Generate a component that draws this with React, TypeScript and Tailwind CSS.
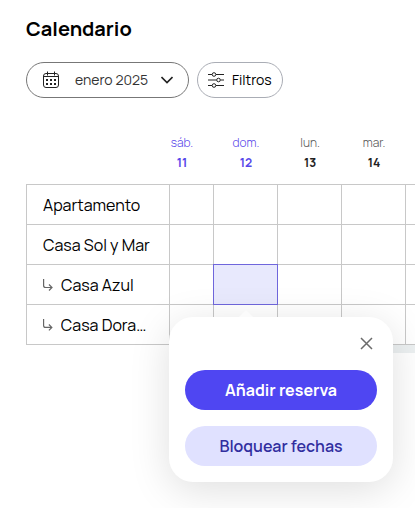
import { useState } from "react";

const days = [
  { name: "sáb.", number: 11, weekend: true },
  { name: "dom.", number: 12, weekend: true },
  { name: "lun.", number: 13, weekend: false },
  { name: "mar.", number: 14, weekend: false },
];

const properties = [
  { name: "Apartamento", child: false },
  { name: "Casa Sol y Mar", child: false },
  { name: "Casa Azul", child: true },
  { name: "Casa Dorada", child: true },
];

const CalendarIcon = () => (
  <svg width="18" height="18" viewBox="0 0 18 18" fill="none" stroke="#222" aria-hidden="true">
    <rect x="1.5" y="2.5" width="15" height="14" rx="2.5" />
    <path d="M1.5 5.5h15M5.500 .5v4M12.500 .5v4" />
    <g fill="#222" stroke="none">
      <rect x="4" y="8" width="2" height="2" />
      <rect x="8" y="8" width="2" height="2" />
      <rect x="12" y="8" width="2" height="2" />
      <rect x="4" y="12" width="2" height="2" />
      <rect x="8" y="12" width="2" height="2" />
      <rect x="12" y="12" width="2" height="2" />
    </g>
  </svg>
);

const FilterIcon = () => (
  <svg width="16" height="16" viewBox="0 0 16 16" fill="none" stroke="#222" aria-hidden="true">
    <path d="M0 2.5h4M8 2.5h8M0 8h8.500M12.500 8H16M0 13.500h4M8 13.500h8" />
    <circle cx="6" cy="2.500" r="1.800" />
    <circle cx="10.500" cy="8" r="1.800" />
    <circle cx="6" cy="13.500" r="1.800" />
  </svg>
);

const ChildIcon = () => (
  <svg width="10" height="12" viewBox="0 0 10 12" fill="none" stroke="#666" strokeWidth="1.200" aria-hidden="true">
    <path d="M.6 0v6.500q0 2 2 2H9M6 5.500l3 3-3 3" />
  </svg>
);

const BookingMenu = ({ onClose }: { onClose: () => void }) => (
  <div
    role="dialog"
    aria-label="12 de enero"
    className="absolute top-[52px] -left-[45px] z-10 w-56 rounded-3xl bg-white p-4 shadow-[0_8px_40px_rgba(0,0,0,0.13)]"
  >
    <svg
      width="14"
      height="7"
      viewBox="0 0 14 7"
      fill="#fbfbfb"
      className="absolute bottom-full left-[70px]"
      aria-hidden="true"
    >
      <path d="M0 7l6-6q1-1 2 0l6 6z" />
    </svg>
    <div className="mb-4 flex h-[21px] items-center justify-end">
      <button onClick={onClose} aria-label="Cerrar" className="p-1">
        <svg width="13" height="13" viewBox="0 0 13 13" stroke="#6b6b6b" strokeWidth="1.500" aria-hidden="true">
          <path d="M1 1l11 11M12 1L1 12" />
        </svg>
      </button>
    </div>
    <div className="flex flex-col gap-4">
      <button className="h-10 rounded-full bg-[#4f46f2] text-base font-bold text-white">
        Añadir reserva
      </button>
      <button className="h-10 rounded-full bg-[#e0e1ff] text-base font-semibold text-[#312e9f]">
        Bloquear fechas
      </button>
    </div>
  </div>
);

const App = () => {
  const [open, setOpen] = useState(true);

  return (
    <main className="min-h-screen bg-white pt-[17px] pl-[26px] font-['Manrope','Inter',sans-serif] text-black">
      <h1 className="text-xl leading-6 font-bold">Calendario</h1>

      <div className="mt-[21px] flex gap-2">
        <label className="flex h-9 w-[163px] items-center rounded-full border border-[#777] px-[15px]">
          <CalendarIcon />
          <select
            aria-label="Mes"
            className="ml-[15px] w-20 appearance-none bg-transparent text-sm text-[#333]"
          >
            <option>enero 2025</option>
          </select>
          <svg width="12" height="8" viewBox="0 0 12 8" fill="none" stroke="#222" strokeWidth="1.600" className="ml-auto" aria-hidden="true">
            <path d="M.5 1L6 6.500 11.500 1" />
          </svg>
        </label>
        <button className="flex h-9 w-[86px] items-center gap-2 rounded-full border border-[#aaadb5] pl-[10px] text-sm">
          <FilterIcon />
          Filtros
        </button>
      </div>

      <table className="mt-[35px] w-full table-fixed border-collapse">
        <colgroup>
          <col className="w-[143px]" />
          <col className="w-11" />
          <col className="w-16" />
          <col className="w-16" />
          <col className="w-16" />
          <col />
        </colgroup>
        <thead>
          <tr className="h-[51px] align-top">
            <td />
            {days.map((d, i) => (
              <th
                key={d.number}
                scope="col"
                className={`py-0 pl-px text-xs leading-5 whitespace-nowrap ${i === 0 ? "pr-5" : "pr-0"} ${
                  d.weekend ? "text-[#5747ea]" : "text-[#222]"
                }`}
              >
                <div className={`font-light ${d.weekend ? "" : "text-[#555]"}`}>
                  {d.name}
                </div>
                <div className="font-bold">{d.number}</div>
              </th>
            ))}
            <td />
          </tr>
        </thead>
        <tbody>
          {properties.map((p) => (
            <tr key={p.name} className="h-10">
              <th
                scope="row"
                className="border border-[#c8c8c8] px-4 pt-0.5 pb-0 text-left text-base font-normal"
              >
                <div className="flex items-center gap-2">
                  {p.child && <ChildIcon />}
                  <span className="truncate">{p.name}</span>
                </div>
              </th>
              {days.map((d) => {
                const selected = p.name === "Casa Azul" && d.number === 12;
                return (
                  <td key={d.number} className="relative border border-[#c8c8c8] p-0">
                    {selected && (
                      <>
                        <button
                          onClick={() => setOpen(!open)}
                          aria-label="Casa Azul, 12 de enero"
                          className="absolute -inset-px border border-[#6f66dc] bg-[#e8e9fd]"
                        />
                        {open && <BookingMenu onClose={() => setOpen(false)} />}
                      </>
                    )}
                  </td>
                );
              })}
              <td className="border-y border-[#c8c8c8] p-0" />
            </tr>
          ))}
        </tbody>
      </table>
      <div className="ml-36 h-2 bg-[#ecf0f1]" />
    </main>
  );
};

export default App;
